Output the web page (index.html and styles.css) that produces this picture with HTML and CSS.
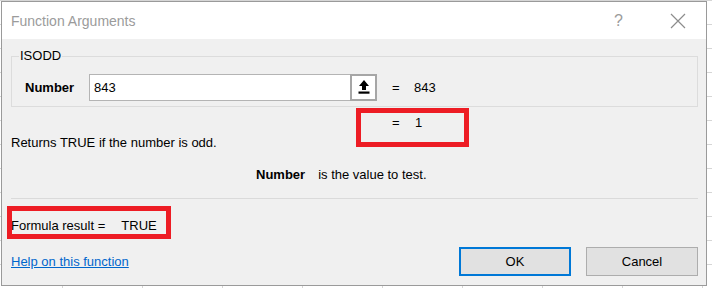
FILE: index.html
```html
<!DOCTYPE html>
<html lang="en">
<head>
<meta charset="UTF-8">
<title>Function Arguments</title>
<link rel="stylesheet" href="styles.css">
</head>
<body>

<div class="dialog">
  <div class="titlebar">
    <span class="title">Function Arguments</span>
    <span class="help-btn">?</span>
    <span class="close-btn">
      <svg width="16" height="16" viewBox="0 0 16 16"><path d="M1 1L15 15M15 1L1 15" stroke="#8c8c8c" stroke-width="1.2" fill="none"/></svg>
    </span>
  </div>

  <div class="content">
    <fieldset class="group">
      <legend>ISODD</legend>
      <div class="arg-row">
        <label class="arg-name">Number</label>
        <div class="ref-box">
          <input type="text" class="arg-input" value="843">
          <button class="collapse-btn">
            <svg width="12" height="14" viewBox="0 0 12 14"><path d="M6 0L11 6H8V10H4V6H1Z" fill="#000"/><rect x="0.5" y="11.5" width="11" height="2.2" fill="#000"/></svg>
          </button>
        </div>
        <span class="eq">=</span>
        <span class="val">843</span>
      </div>
    </fieldset>

    <div class="result-row"><span class="eq">=</span><span class="val">1</span></div>
    <div class="desc">Returns TRUE if the number is odd.</div>
    <div class="arg-help"><b>Number</b><span>is the value to test.</span></div>

    <div class="sep"></div>

    <div class="formula">Formula result =<span class="formula-val">TRUE</span></div>

    <div class="footer">
      <a href="#" class="help-link">Help on this function</a>
      <button class="btn btn-ok">OK</button>
      <button class="btn btn-cancel">Cancel</button>
    </div>
  </div>

  <!-- red annotation boxes -->
  <div class="mark mark-result"></div>
  <div class="mark mark-formula"></div>
</div>

</body>
</html>
```

FILE: styles.css
```css
body {
  margin: 0;
  font-family: 'Liberation Sans', Arial, sans-serif;
  font-size: 13px;
  color: #000;
  background-color: #fff;
  background-image:
    linear-gradient(to right, #d6d6d6 1px, transparent 1px),
    linear-gradient(to bottom, #d6d6d6 1px, transparent 1px);
  background-size: 80px 24px;
  background-position: 62px 0, 0 0;
  height: 288px;
  overflow: hidden;
}
.dialog {
  position: relative;
  box-sizing: border-box;
  width: 706px;
  height: 285px;
  margin: 1px 0 0 1px;
  border: 1px solid #9a9a9a;
  background-color: #f0f0f0;
}
.titlebar {
  display: flex;
  align-items: center;
  height: 37px;
  background-color: #fff;
  padding-left: 9px;
}
.title {
  font-size: 14px;
  color: #9b9b9b;
  flex: 1;
}
.help-btn {
  font-size: 16px;
  color: #9b9b9b;
  margin-right: 47px;
}
.close-btn {
  display: flex;
  margin-right: 20px;
}
.content {
  padding: 0 8px 0 9px;
}
.group {
  margin: 10px 0 0 0;
  padding: 10px 0 3px 2px;
  border: 1px solid #dcdcdc;
  height: 58px;
  box-sizing: border-box;
}
.group legend {
  padding: 0 1px;
  margin-left: 5px;
  line-height: 14px;
  color: #000;
}
.arg-row {
  display: flex;
  align-items: center;
  height: 28px;
  padding-left: 11px;
}
.arg-name {
  font-weight: bold;
  width: 64px;
}
.ref-box {
  display: flex;
  height: 27px;
}
.arg-input {
  box-sizing: border-box;
  width: 261px;
  height: 27px;
  border: 1px solid #b4b4b4;
  border-right: none;
  padding: 0 4px;
  font-family: inherit;
  font-size: 13px;
  background: #fff;
  outline: none;
}
.collapse-btn {
  box-sizing: border-box;
  width: 27px;
  height: 27px;
  border: 2px solid #a6a6a6;
  background: #fff;
  padding: 0;
  display: flex;
  align-items: center;
  justify-content: center;
}
.eq {
  margin-left: 15px;
  width: 22px;
}
.result-row {
  display: flex;
  height: 20px;
  line-height: 20px;
  margin-top: 6px;
  padding-left: 381px;
}
.result-row .eq {
  margin-left: 0;
  width: 23px;
}
.desc {
  height: 20px;
  line-height: 20px;
  margin-top: 0;
}
.arg-help {
  height: 20px;
  line-height: 20px;
  margin-top: 12px;
  padding-left: 245px;
}
.arg-help span {
  margin-left: 13px;
}
.sep {
  margin-top: 13px;
  border-top: 1px solid #dadada;
}
.formula {
  height: 20px;
  line-height: 20px;
  margin-top: 17px;
}
.formula-val {
  margin-left: 16px;
}
.footer {
  display: flex;
  align-items: center;
  margin-top: 11px;
  height: 29px;
}
.help-link {
  color: #0066cc;
  flex: 1;
}
.btn {
  box-sizing: border-box;
  height: 29px;
  width: 112px;
  font-family: inherit;
  font-size: 13px;
  color: #000;
  background-color: #e1e1e1;
  padding: 0;
}
.btn-ok {
  border: 2px solid #0078d7;
  margin-right: 15px;
}
.btn-cancel {
  border: 1px solid #adadad;
}
.mark {
  position: absolute;
  box-sizing: border-box;
  border: 5px solid #ed1c24;
}
.mark-result {
  left: 354px;
  top: 106px;
  width: 113px;
  height: 39px;
}
.mark-formula {
  left: 5px;
  top: 204px;
  width: 164px;
  height: 33px;
}
```
